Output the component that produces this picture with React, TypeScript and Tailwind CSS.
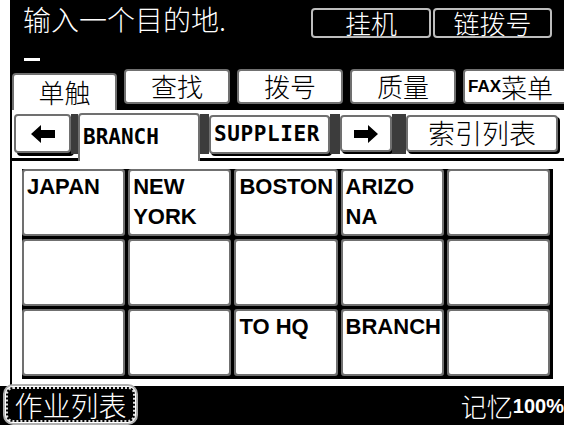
import type { ReactNode } from "react";
import clsx from "clsx";
import { twMerge } from "tailwind-merge";

const cjk = "font-['Noto_Sans_CJK_SC',sans-serif] font-light";
const latin = "font-['Liberation_Sans',Arial,sans-serif] font-bold";
const mono = "font-['DejaVu_Sans_Mono',monospace] font-bold";
const stipple = "bg-[#3c3c3c]";

const cells: string[][] = [
  ["JAPAN", "NEW\nYORK", "BOSTON", "ARIZO\nNA", ""],
  ["", "", "", "", ""],
  ["", "", "TO HQ", "BRANCH", ""],
];

function Frame({
  className,
  inner,
  children,
}: {
  className?: string;
  inner?: string;
  children?: ReactNode;
}) {
  return (
    <div className={twMerge("shrink-0 rounded-[4px] bg-[#707070] p-[2px]", className)}>
      <div className={twMerge("h-full w-full rounded-[2px] bg-white", inner)}>
        {children}
      </div>
    </div>
  );
}

function Arrow({ flip }: { flip?: boolean }) {
  return (
    <svg
      width="24"
      height="18"
      viewBox="0 0 24 18"
      className={flip ? "-scale-x-100" : undefined}
    >
      <polygon points="0,9 10,0 10,5 24,5 24,13 10,13 10,18" fill="#000" />
    </svg>
  );
}

export default function App() {
  return (
    <div className="flex h-[425px] w-[564px] flex-col overflow-hidden bg-white text-black">
      {/* top band */}
      <div className="ml-[10px] flex h-[110px] flex-col overflow-hidden bg-black">
        <div className="flex h-[42px] items-start justify-between pl-[13px] pr-[12px] pt-[2px]">
          <div className={clsx(cjk, "text-[28px] leading-[34px] text-white")}>
            输入一个目的地.
          </div>
          <div className="flex gap-[2px] pt-[6px]">
            <Frame className="h-[30px] w-[120px] bg-[#bdbdbd]" inner="bg-black">
              <div className={clsx(cjk, "text-center text-[26px] leading-[25px] text-white")}>
                挂机
              </div>
            </Frame>
            <Frame className="h-[30px] w-[119px] bg-[#bdbdbd]" inner="bg-black">
              <div className={clsx(cjk, "text-center text-[26px] leading-[25px] text-white")}>
                链拨号
              </div>
            </Frame>
          </div>
        </div>
        <div className="ml-[14px] mt-[16px] h-[3px] w-[16px] bg-white" />
        <div className="mt-auto flex items-end gap-[7px] pl-[2px]">
          <Frame className="h-[37px] w-[105px] rounded-b-none pb-0" inner="rounded-b-none">
            <div className={clsx(cjk, "text-center text-[26px] leading-[34px]")}>单触</div>
          </Frame>
          {["查找", "拨号", "质量"].map((t) => (
            <Frame key={t} className="mb-[6px] h-[35px] w-[106px]">
              <div className={clsx(cjk, "text-center text-[26px] leading-[29px]")}>{t}</div>
            </Frame>
          ))}
          <Frame className="mb-[6px] h-[35px] w-[106px]">
            <div className="flex h-full items-center pl-[3px]">
              <span className={clsx(latin, "text-[17px]")}>FAX</span>
              <span className={clsx(cjk, "text-[26px] leading-[29px]")}>菜单</span>
            </div>
          </Frame>
        </div>
      </div>

      {/* panel */}
      <div className="ml-[10px] flex flex-1 flex-col border-l-2 border-black">
        <div className="flex h-[51px] items-start border-b-[3px] border-black">
          <Frame className="ml-[2px] mt-[4px] h-[39px] w-[57px] shadow-[3px_3px_0_0_#000]">
            <div className="flex h-full items-center justify-center">
              <Arrow />
            </div>
          </Frame>
          <div className={clsx("mt-[4px] h-[40px] w-[7px]", stipple)} />
          <Frame
            className="relative z-10 mt-[3px] h-[48px] w-[122px] rounded-b-none pb-0"
            inner="rounded-b-none"
          >
            <div className={clsx(mono, "pl-[3px] text-[21px] leading-[44px]")}>BRANCH</div>
          </Frame>
          <div className={clsx("mt-[4px] h-[40px] w-[9px]", stipple)} />
          <Frame className="mt-[5px] h-[39px] w-[121px] shadow-[2px_2px_0_0_#000]">
            <div className={clsx(mono, "pl-[3px] text-[21px] leading-[35px] tracking-[0.6px]")}>
              SUPPLIER
            </div>
          </Frame>
          <div className={clsx("mt-[4px] h-[40px] w-[10px]", stipple)} />
          <Frame className="mt-[5px] h-[37px] w-[52px] shadow-[2px_2px_0_0_#000]">
            <div className="flex h-full items-center justify-center">
              <Arrow flip />
            </div>
          </Frame>
          <div className={clsx("mt-[4px] h-[40px] w-[14px]", stipple)} />
          <Frame className="mt-[5px] h-[37px] w-[152px] shadow-[2px_2px_0_0_#000]">
            <div className={clsx(cjk, "text-center text-[27px] leading-[32px]")}>索引列表</div>
          </Frame>
        </div>

        <div className="ml-[10px] mt-[8px] grid h-[210px] w-[531px] grid-cols-5 grid-rows-3 gap-[3px] bg-black pb-[3px] pr-[3px]">
          {cells.flat().map((c, i) => (
            <Frame key={i} className="rounded-[3px]">
              <div
                className={clsx(
                  latin,
                  "whitespace-pre-line pl-[3px] pt-[1px] text-[22px] leading-[30px]"
                )}
              >
                {c}
              </div>
            </Frame>
          ))}
        </div>
      </div>

      {/* bottom bar */}
      <div className="flex h-[39px] items-center justify-between bg-black">
        <div className="relative -mt-[2px] ml-[3px] h-[41px] w-[135px] rounded-[10px] border-2 border-[#b0b0b0] bg-white p-[1px]">
          <div className="h-full w-full rounded-[7px] border-2 border-dotted border-[#ddd] bg-black">
            <div className={clsx(cjk, "text-center text-[28px] leading-[32px] text-white")}>
              作业列表
            </div>
          </div>
        </div>
        <div className="flex items-center text-white">
          <span className={clsx(cjk, "text-[26px] leading-[32px]")}>记忆</span>
          <span className={clsx(latin, "text-[20px] leading-[32px]")}>100%</span>
        </div>
      </div>
    </div>
  );
}
